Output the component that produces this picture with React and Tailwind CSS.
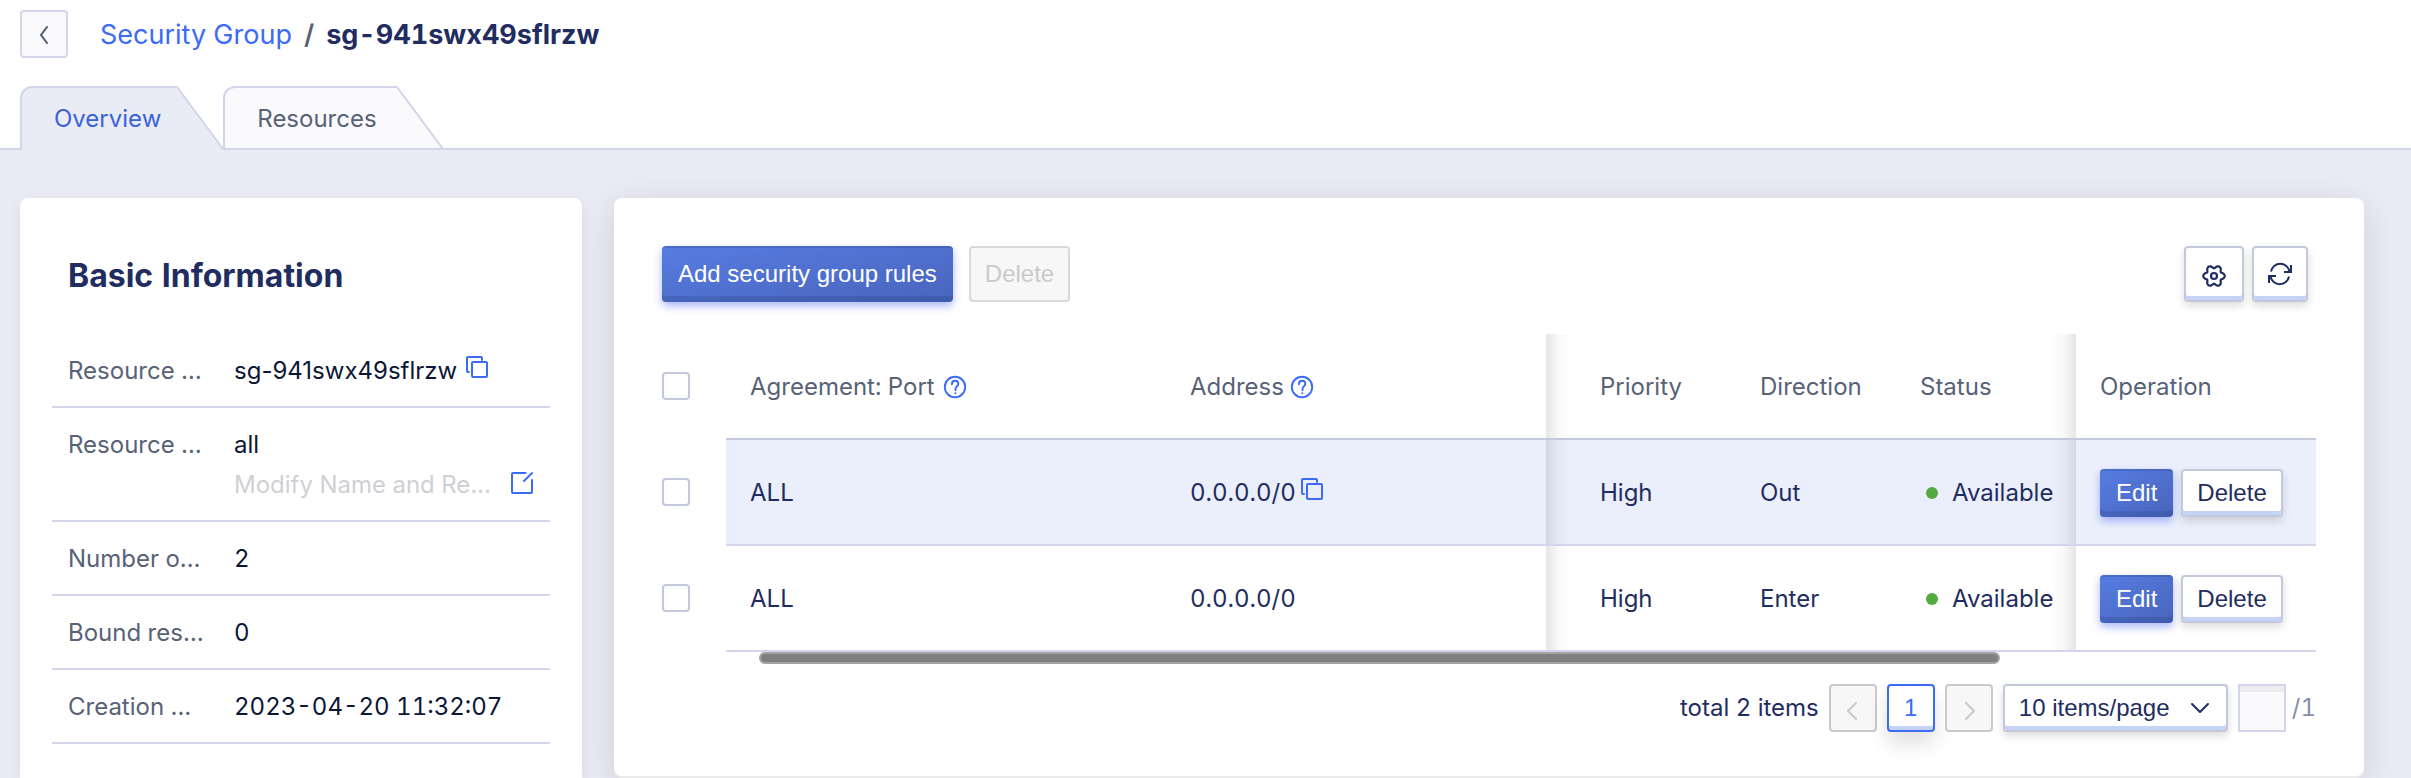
import React from "react";

const PRIMARY =
  "cursor-pointer rounded bg-linear-to-br from-[#567ce2] to-[#4965bc] px-4 text-white shadow-[inset_0_2px_0_rgba(20,35,90,0.16),inset_0_-6px_0_rgba(20,35,90,0.16),0_4px_8px_rgba(70,95,235,0.45)]";
const RAISED =
  "cursor-pointer rounded border-2 border-[#c3c9db] bg-white text-[#1f2d60] shadow-[inset_0_-4px_0_#c5d4f6,0_4px_8px_rgba(0,0,0,0.14)]";
const DISABLED = "rounded border-2 bg-[#f7f7f7] text-[#cacaca]";

// Six-lobed gear outline, traced as a wave around a circle.
const GEAR = Array.from({ length: 72 }, (_, i) => {
  const a = (i / 72) * Math.PI * 2;
  const r = 9.4 + 1.5 * Math.cos(6 * a) - 0.2 * Math.cos(12 * a);
  return `${i ? "L" : "M"}${(12 + r * Math.cos(a)).toFixed(2)} ${(12 + r * Math.sin(a)).toFixed(2)}`;
}).join("") + "Z";

function Copy() {
  return (
    <button type="button" aria-label="Copy" className="-mt-2 h-6 w-6 cursor-pointer text-[#3c6bf7]">
      <svg viewBox="0 0 24 24" className="block h-6 w-6" fill="none" stroke="currentColor" strokeWidth="2">
        <rect x="7" y="7" width="15" height="15" rx="1" />
        <path d="M17 5V3a1 1 0 0 0-1-1H3a1 1 0 0 0-1 1v13a1 1 0 0 0 1 1h1" strokeLinecap="round" />
      </svg>
    </button>
  );
}

function Help() {
  return (
    <svg viewBox="0 0 24 24" className="h-6 w-6 text-[#3c6bf7]" fill="none" stroke="currentColor" strokeWidth="1.9" aria-hidden="true">
      <circle cx="12" cy="12" r="10.2" />
      <path d="M8.9 9.2c0-2.1 1.4-3.5 3.2-3.5s3.2 1.3 3.2 3c0 2.5-2.8 2.7-2.8 5.2v1.3" strokeLinecap="round" />
      <circle cx="12.4" cy="18.2" r="1" fill="currentColor" stroke="none" />
    </svg>
  );
}

function Chevron({ d, className }) {
  return (
    <svg viewBox="0 0 20 20" className={className} fill="none" stroke="currentColor" strokeWidth="2" strokeLinecap="round" strokeLinejoin="round" aria-hidden="true">
      <path d={d} />
    </svg>
  );
}

function Tab({ active, children }) {
  return (
    <button
      type="button"
      role="tab"
      aria-selected={active}
      className={active ? "flex h-16 cursor-pointer text-[#3a62d8]" : "flex h-[62px] cursor-pointer text-[#576276]"}
    >
      <span
        className={
          "flex h-full items-center rounded-tl-xl border-t-2 border-l-2 border-[#d3d6ea] pl-8 " +
          (active ? "bg-[#eaecf5] pr-4" : "bg-[#fafafd] pt-0.5 pr-5")
        }
      >
        {children}
      </span>
      {active ? (
        <svg viewBox="0 0 46 64" className="h-16 w-[46px]" aria-hidden="true">
          <path d="M0 0L46 62V64H0Z" fill="#eaecf5" />
          <path d="M0 1L46 63" fill="none" stroke="#d3d6ea" strokeWidth="2" />
        </svg>
      ) : (
        <svg viewBox="0 0 46 62" className="h-[62px] w-[46px]" aria-hidden="true">
          <path d="M0 0L46 62H0Z" fill="#fafafd" />
          <path d="M0 1L46 63" fill="none" stroke="#d3d6ea" strokeWidth="2" />
        </svg>
      )}
    </button>
  );
}

function Row({ label, children }) {
  return (
    <div className="flex border-b-2 border-[#d3d6ea] px-4 pt-[17px] pb-[15px] leading-10">
      <dt className="w-[166px] shrink-0 whitespace-nowrap text-[#576276]">{label}</dt>
      <dd className="min-w-0 flex-1 text-[#0c1636]">{children}</dd>
    </div>
  );
}

function Check({ label }) {
  return (
    <input
      type="checkbox"
      aria-label={label}
      className="block h-7 w-7 cursor-pointer appearance-none rounded border-2 border-[#c3c9db] bg-white checked:bg-[#3c6bf7]"
    />
  );
}

const CELL = "pt-0.5 pl-6";
const LEFT_FADE =
  "relative pt-0.5 pl-[54px] before:absolute before:inset-y-0 before:left-0 before:w-6 before:bg-linear-to-r before:from-black/10 before:via-black/3 before:to-transparent";
const RIGHT_FADE =
  "relative pt-0.5 pl-6 after:absolute after:inset-y-0 after:right-0 after:w-6 after:bg-linear-to-l after:from-black/10 after:via-black/3 after:to-transparent";

const rules = [
  { port: "ALL", address: "0.0.0.0/0", copy: true, priority: "High", direction: "Out", status: "Available" },
  { port: "ALL", address: "0.0.0.0/0", copy: false, priority: "High", direction: "Enter", status: "Available" },
];

export default function App() {
  return (
    <div className="flex min-h-screen flex-col bg-[#eaebf5] font-['Inter',sans-serif] text-2xl text-[#1f2d60] tabular-nums">
      <header className="border-b-2 border-[#d3d6ea] bg-white px-5 pt-2.5">
        <nav className="flex items-center gap-8" aria-label="Breadcrumb">
          <button
            type="button"
            aria-label="Back"
            className="flex h-12 w-12 cursor-pointer items-center justify-center rounded border-2 border-[#d3d6ea] bg-[#fafafd] text-[#4b586c]"
          >
            <Chevron d="M13 3L7 11l6 8" className="h-5 w-5" />
          </button>
          <div className="flex items-center gap-3 pt-0.5 text-[27px] leading-10">
            <a href="#groups" className="text-[#3c6bf7]">Security Group</a>
            <span className="font-semibold text-[#576276]">/</span>
            <h1 className="font-bold">sg-941swx49sflrzw</h1>
          </div>
        </nav>
        <div role="tablist" className="mt-7 flex h-[62px] items-start">
          <Tab active>Overview</Tab>
          <Tab active={false}>Resources</Tab>
        </div>
      </header>

      <main className="flex flex-1 gap-8 pt-12 pr-[47px] pl-5">
        <aside className="w-[562px] shrink-0 rounded-t-lg bg-white px-8 pt-12 shadow-[0_4px_16px_rgba(0,0,0,0.08)]">
          <h2 className="px-4 pt-2.5 text-[32px] leading-10 font-bold">Basic Information</h2>
          <dl className="mt-[38px]">
            <Row label="Resource …">
              <span className="flex items-center gap-2 proportional-nums">
                sg-941swx49sflrzw
                <Copy />
              </span>
            </Row>
            <Row label="Resource …">
              <div>all</div>
              <div className="flex items-center justify-between text-[#cfd0d6]">
                <span>Modify Name and Re…</span>
                <button type="button" aria-label="Modify" className="-mt-1 h-6 w-6 cursor-pointer text-[#3c6bf7]">
                  <svg viewBox="0 0 24 24" className="block h-6 w-6" fill="none" stroke="currentColor" strokeWidth="2" strokeLinecap="round" strokeLinejoin="round">
                    <path d="M15.500 2H3a1 1 0 0 0-1 1v18a1 1 0 0 0 1 1h18a1 1 0 0 0 1-1V9" />
                    <path d="M14 10l8-8" />
                  </svg>
                </button>
              </div>
            </Row>
            <Row label="Number o…">2</Row>
            <Row label="Bound res…">0</Row>
            <Row label="Creation …">2023-04-20 11:32:07</Row>
          </dl>
        </aside>

        <section className="min-w-0 flex-1 self-start rounded-lg bg-white px-12 pt-12 pb-11 shadow-[0_2px_0_#ebebeb,0_8px_36px_rgba(0,0,0,0.13)]">
          <div className="flex items-center justify-between pr-2">
            <div className="flex gap-4 font-['Liberation_Sans',sans-serif]">
              <button type="button" className={PRIMARY + " h-14"}>Add security group rules</button>
              <button type="button" disabled className={DISABLED + " h-14 border-[#d9d9d9] px-3.5"}>Delete</button>
            </div>
            <div className="flex gap-2">
              <button type="button" aria-label="Settings" className={RAISED + " flex h-14 w-[60px] items-center justify-center pt-1"}>
                <svg viewBox="0 0 24 24" className="h-6 w-6" fill="none" stroke="currentColor" strokeWidth="2.200" strokeLinejoin="round">
                  <path d={GEAR} />
                  <circle cx="12" cy="12" r="3" />
                </svg>
              </button>
              <button type="button" aria-label="Refresh" className={RAISED + " flex h-14 w-14 items-center justify-center"}>
                <svg viewBox="0 0 24 24" className="h-6 w-6" fill="none" stroke="currentColor" strokeWidth="2">
                  <path d="M3 9.500A9.400 9.400 0 0 1 21.500 9.500M21 14.500A9.400 9.400 0 0 1 2.500 14.500" />
                  <path d="M23 3v7h-7M1 21v-7h7" />
                </svg>
              </button>
            </div>
          </div>

          <table className="mt-8 w-full table-fixed border-separate border-spacing-0 text-left">
            <colgroup>
              <col className="w-16" />
              <col className="w-[440px]" />
              <col />
              <col className="w-[190px]" />
              <col className="w-[160px]" />
              <col className="w-[180px]" />
              <col className="w-[240px]" />
            </colgroup>
            <thead className="text-[#576276] [&_th]:h-[106px] [&_th]:font-normal [&_th:not(:first-child)]:border-b-2 [&_th:not(:first-child)]:border-[#c3c9db]">
              <tr>
                <th className="p-0 pb-0.5"><Check label="Select all rules" /></th>
                <th className={CELL}><span className="flex items-center gap-2">Agreement: Port <Help /></span></th>
                <th className={CELL}><span className="flex items-center gap-1.5">Address <Help /></span></th>
                <th className={LEFT_FADE}>Priority</th>
                <th className={CELL}>Direction</th>
                <th className={RIGHT_FADE}>Status</th>
                <th className={CELL}>Operation</th>
              </tr>
            </thead>
            <tbody className="[&_td]:h-[106px] [&_td:not(:first-child)]:border-b-2 [&_td:not(:first-child)]:border-[#d3d6ea]">
              {rules.map((r, i) => (
                <tr key={i} className={i === 0 ? "[&_td:not(:first-child)]:bg-[#ebeffc]" : ""}>
                  <td className="p-0 pb-0.5"><Check label={"Select rule " + (i + 1)} /></td>
                  <td className={CELL}>{r.port}</td>
                  <td className={CELL}>
                    <span className="flex items-center gap-1">{r.address}{r.copy && <Copy />}</span>
                  </td>
                  <td className={LEFT_FADE}>{r.priority}</td>
                  <td className={CELL}>{r.direction}</td>
                  <td className={RIGHT_FADE}>
                    <span className="flex items-center gap-3.5 pl-1.5 whitespace-nowrap">
                      <span className="h-3 w-3 shrink-0 rounded-full bg-[#52aa41]" />
                      {r.status}
                    </span>
                  </td>
                  <td className={CELL}>
                    <div className="flex gap-2 font-['Liberation_Sans',sans-serif]">
                      <button type="button" className={PRIMARY + " h-12"}>Edit</button>
                      <button type="button" className={RAISED + " h-12 px-3.5"}>Delete</button>
                    </div>
                  </td>
                </tr>
              ))}
            </tbody>
          </table>
          <div className="pr-[316px] pl-[97px]">
            <div className="h-3 rounded-full border-2 border-[#a3a3a3] bg-[#808080]" />
          </div>

          <div className="mt-5 flex items-center justify-end gap-2.5">
            <span>total 2 items</span>
            <button type="button" disabled aria-label="Previous page" className={DISABLED + " flex h-12 w-12 items-center justify-center border-[#cacaca] pt-1"}>
              <Chevron d="M13 3L5 11l8 8" className="h-5 w-5" />
            </button>
            <button type="button" aria-current="page" className="h-12 w-12 cursor-pointer rounded border-2 border-[#3c6bf7] bg-white font-['Liberation_Sans',sans-serif] text-[#3c6bf7] shadow-[inset_0_-4px_0_#c5d4f6,0_12px_20px_rgba(0,0,0,0.12)]">
              1
            </button>
            <button type="button" disabled aria-label="Next page" className={DISABLED + " flex h-12 w-12 items-center justify-center border-[#cacaca] pt-1"}>
              <Chevron d="M7 3l8 8-8 8" className="h-5 w-5" />
            </button>
            <div className="relative">
              <select aria-label="Items per page" className={RAISED + " block h-12 w-[225px] appearance-none pr-12 pl-3.5 font-['Liberation_Sans',sans-serif]"}>
                <option>10 items/page</option>
              </select>
              <Chevron d="M2 6l8 8 8-8" className="pointer-events-none absolute top-3.5 right-4.5 h-5 w-5" />
            </div>
            <div className="flex items-center gap-1.5">
              <input type="text" aria-label="Page number" className="h-12 w-12 border-2 border-[#d3d6ea] bg-[#fafafd] text-center shadow-[inset_0_6px_0_#ebebf0]" />
              <span className="text-[#8390a8]">/1</span>
            </div>
          </div>
        </section>
      </main>
    </div>
  );
}
